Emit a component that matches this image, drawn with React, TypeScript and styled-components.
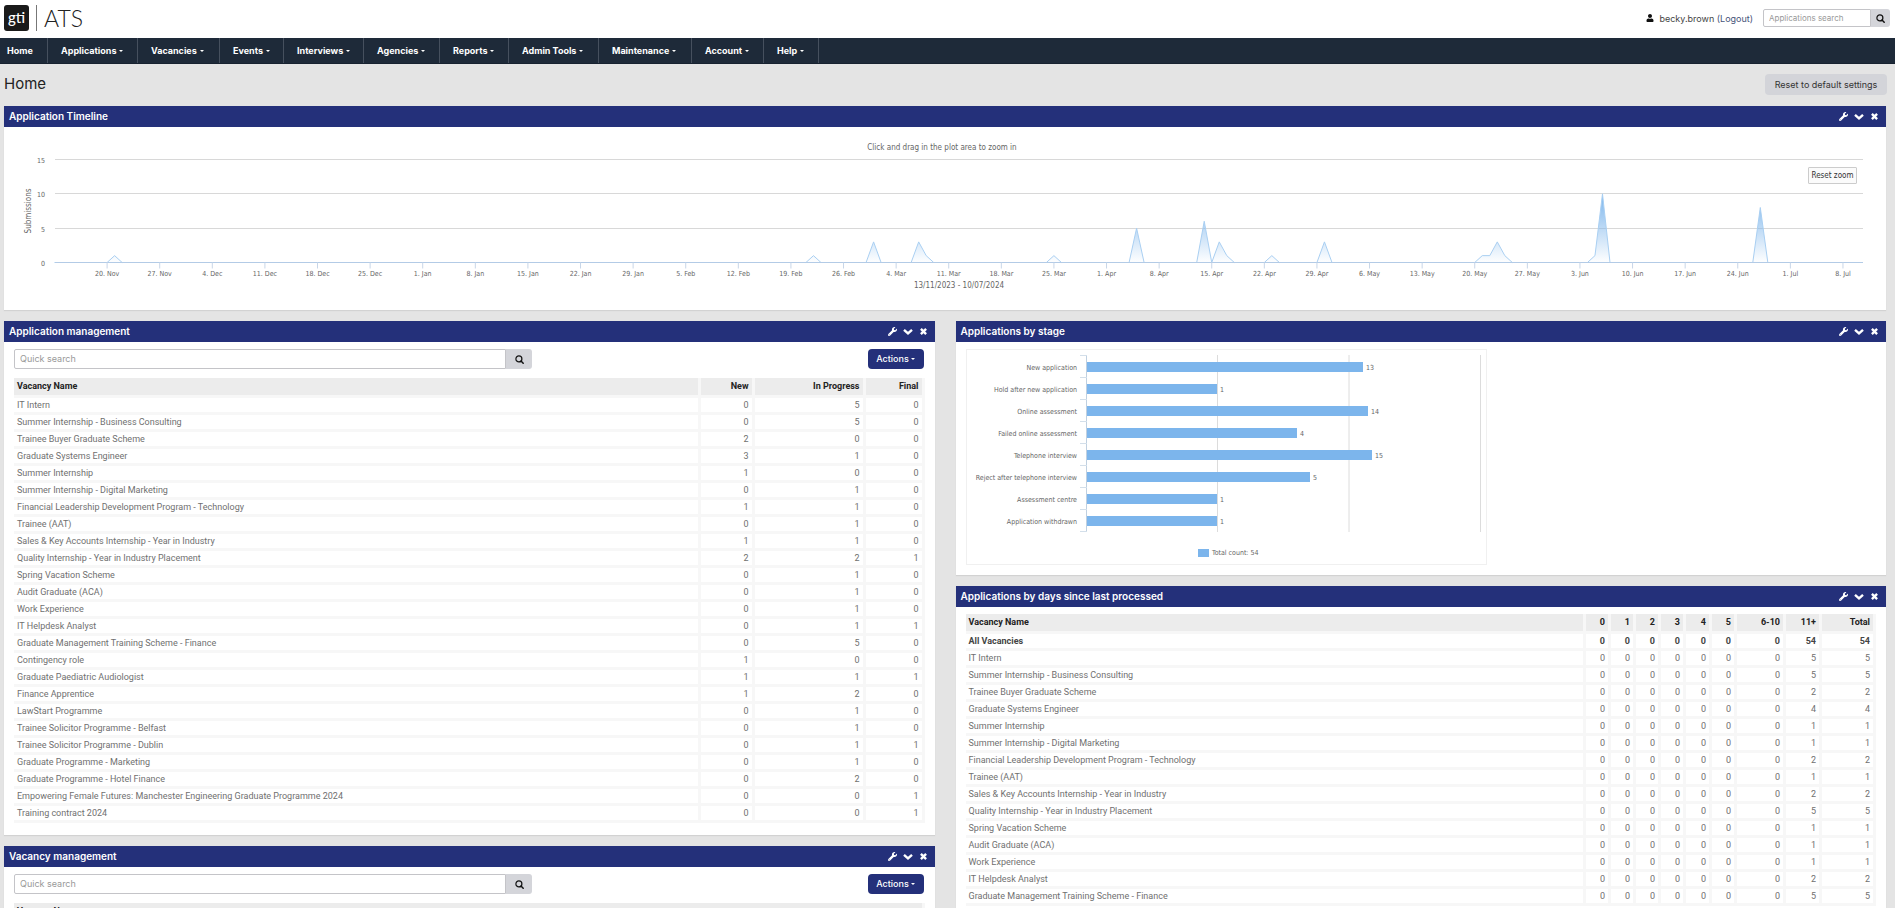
import React, { useLayoutEffect, useRef, useState } from "react";
import styled, { createGlobalStyle } from "styled-components";
import { FaWrench, FaUser } from "react-icons/fa";

const chartFont = '"DejaVu Sans Condensed", "DejaVu Sans", sans-serif';

const GlobalStyle = createGlobalStyle`
  * { box-sizing: border-box; }
  body {
    margin: 0;
    background: #e4e4e4;
    color: #666;
    font-family: Inter, "Open Sans", sans-serif;
    font-size: 9px;
  }
  button, input { font-family: inherit; margin: 0; }
  a { color: inherit; text-decoration: none; }
`;

const Page = styled.div`
  height: 100vh;
  overflow: hidden;
  background: #e4e4e4;
`;

const TopBar = styled.header`
  display: flex;
  align-items: center;
  justify-content: space-between;
  height: 38px;
  padding: 0 5px 2px 4px;
  background: #fff;
`;

const Brand = styled.a`
  display: flex;
  align-items: center;
  gap: 7px;
`;

const BrandMark = styled.span`
  display: flex;
  align-items: center;
  justify-content: center;
  width: 25px;
  height: 26px;
  padding-bottom: 2px;
  border-radius: 3px;
  background: #1a1a1a;
  color: #fff;
  font: 500 15px/16px Lato, sans-serif;
`;

const BrandRule = styled.span`
  width: 1px;
  height: 26px;
  background: #777;
`;

const BrandName = styled.span`
  color: #222;
  font: 300 23px/26px Lato, sans-serif;
`;

const UserArea = styled.div`
  display: flex;
  align-items: center;
  gap: 10px;
  color: #444;
  font-size: 9px;
`;

const UserName = styled.span`
  display: flex;
  align-items: center;
  gap: 5px;
  svg { color: #111; }
`;

const Logout = styled.a`
  color: #46537a;
`;

const SearchGroup = styled.form<{ $width: number; $height: number }>`
  display: flex;
  width: ${(p) => p.$width}px;
  height: ${(p) => p.$height}px;
`;

const SearchInput = styled.input<{ $size: number }>`
  flex: 1;
  min-width: 0;
  padding: 0 5px 1px;
  border: 1px solid #c4c4c8;
  border-radius: 2px 0 0 2px;
  background: #fff;
  font-size: ${(p) => p.$size}px;
  &::placeholder { color: #999; opacity: 1; }
`;

const SearchButton = styled.button<{ $width: number }>`
  display: flex;
  align-items: center;
  justify-content: center;
  width: ${(p) => p.$width}px;
  padding: 0;
  border: 0;
  border-radius: 0 3px 3px 0;
  background: #d4d5da;
  color: #111;
`;

const Nav = styled.nav`
  display: flex;
  height: 26px;
  background: #1e2a39;
  border-bottom: 1px solid #172230;
`;

const NavItem = styled.a<{ $width: number; $first?: boolean }>`
  display: flex;
  align-items: center;
  gap: 3px;
  width: ${(p) => p.$width}px;
  padding-left: ${(p) => (p.$first ? 7 : 13)}px;
  border-right: 1px solid #46505e;
  color: #fff;
  font-size: 9px;
  font-weight: 700;
  white-space: nowrap;
`;

const Caret = styled.span`
  border: 2px solid transparent;
  border-top-color: currentColor;
  border-bottom: 0;
`;

const TitleRow = styled.div`
  display: flex;
  align-items: center;
  justify-content: space-between;
  height: 42px;
  padding: 0 8px 1px 4px;
`;

const Title = styled.h1`
  margin: 0;
  padding-bottom: 3px;
  color: #222;
  font-size: 15px;
  font-weight: 400;
`;

const ResetButton = styled.button`
  width: 122px;
  height: 21px;
  padding: 0 0 1px;
  border: 0;
  border-radius: 4px;
  background: #d3d4d9;
  color: #333;
  font-size: 9px;
`;

const Content = styled.main`
  display: flex;
  flex-direction: column;
  gap: 11px;
  padding: 0 9px 0 4px;
`;

const Columns = styled.div`
  display: grid;
  grid-template-columns: 1fr 1fr;
  gap: 21px;
  align-items: start;
`;

const Column = styled.div`
  display: flex;
  flex-direction: column;
  gap: 11px;
`;

const PanelBox = styled.section`
  background: #fff;
  box-shadow: 0 1px 1px #d2d2d2;
`;

const PanelHead = styled.header`
  display: flex;
  align-items: center;
  justify-content: space-between;
  height: 21px;
  padding: 0 7px 1px 5px;
  background: #24307a;
  color: #fff;
`;

const PanelTitle = styled.h2`
  margin: 0;
  padding-bottom: 1px;
  font-size: 10px;
  font-weight: 600;
`;

const PanelTools = styled.div`
  display: flex;
  gap: 6px;
`;

const ToolButton = styled.button`
  display: flex;
  padding: 0;
  border: 0;
  background: none;
  color: #fff;
`;

const PanelBody = styled.div<{ $bottom?: number }>`
  padding: 7px 10px ${(p) => p.$bottom ?? 12}px;
`;

const Toolbar = styled.div`
  display: flex;
  justify-content: space-between;
  margin-bottom: 9px;
  padding-right: 1px;
`;

const ActionsButton = styled.button`
  display: flex;
  align-items: center;
  justify-content: center;
  gap: 2px;
  width: 56px;
  height: 20px;
  padding: 0 0 1px;
  border: 0;
  border-radius: 4px;
  background: #24307a;
  color: #fff;
  font-size: 9px;
  font-weight: 500;
`;

const Table = styled.table`
  width: 100%;
  table-layout: fixed;
  border-collapse: separate;
  border-spacing: 0;
  font-family: Roboto, sans-serif;
  font-size: 9px;
  line-height: 12px;
`;

const HeadCell = styled.th<{ $right?: boolean; $width?: number }>`
  width: ${(p) => (p.$width ? `${p.$width}px` : "auto")};
  height: 20px;
  padding: 0 3px 2px;
  border: 0 solid #f7f7f7;
  border-width: 0 3px 3px 0;
  background: #ececec;
  background-clip: padding-box;
  color: #222;
  font-weight: 700;
  text-align: ${(p) => (p.$right ? "right" : "left")};
`;

const Cell = styled.td<{ $right?: boolean; $bold?: boolean }>`
  height: 17px;
  padding: 0 3px 1px;
  border: 0 solid #f7f7f7;
  border-width: 0 3px 3px 0;
  color: ${(p) => (p.$bold ? "#444" : "#707070")};
  font-weight: ${(p) => (p.$bold ? 700 : 400)};
  text-align: ${(p) => (p.$right ? "right" : "left")};
  white-space: nowrap;
`;

const TimelineBox = styled.div`
  position: relative;
  height: 183px;
`;

const ZoomButton = styled.button`
  position: absolute;
  top: 40px;
  right: 29px;
  width: 49px;
  height: 17px;
  padding: 0;
  border: 1px solid #ccc;
  border-radius: 1px;
  background: #fbfbfb;
  color: #333;
  font: 8px ${chartFont};
`;

const ChartSvg = styled.svg`
  display: block;
  width: 100%;
  font-family: ${chartFont};
  fill: #666;
`;

const StageBox = styled.div`
  width: 521px;
  max-width: 100%;
  height: 216px;
  border: 1px solid #f0f0f0;
`;

const menu: [string, number][] = [
  ["Home", 48], ["Applications", 90], ["Vacancies", 82], ["Events", 64], ["Interviews", 80],
  ["Agencies", 76], ["Reports", 69], ["Admin Tools", 90], ["Maintenance", 93], ["Account", 72], ["Help", 55],
];

const vacancies: [string, number, number, number][] = [
  ["IT Intern", 0, 5, 0],
  ["Summer Internship - Business Consulting", 0, 5, 0],
  ["Trainee Buyer Graduate Scheme", 2, 0, 0],
  ["Graduate Systems Engineer", 3, 1, 0],
  ["Summer Internship", 1, 0, 0],
  ["Summer Internship - Digital Marketing", 0, 1, 0],
  ["Financial Leadership Development Program - Technology", 1, 1, 0],
  ["Trainee (AAT)", 0, 1, 0],
  ["Sales & Key Accounts Internship - Year in Industry", 1, 1, 0],
  ["Quality Internship - Year in Industry Placement", 2, 2, 1],
  ["Spring Vacation Scheme", 0, 1, 0],
  ["Audit Graduate (ACA)", 0, 1, 0],
  ["Work Experience", 0, 1, 0],
  ["IT Helpdesk Analyst", 0, 1, 1],
  ["Graduate Management Training Scheme - Finance", 0, 5, 0],
  ["Contingency role", 1, 0, 0],
  ["Graduate Paediatric Audiologist", 1, 1, 1],
  ["Finance Apprentice", 1, 2, 0],
  ["LawStart Programme", 0, 1, 0],
  ["Trainee Solicitor Programme - Belfast", 0, 1, 0],
  ["Trainee Solicitor Programme - Dublin", 0, 1, 1],
  ["Graduate Programme - Marketing", 0, 1, 0],
  ["Graduate Programme - Hotel Finance", 0, 2, 0],
  ["Empowering Female Futures: Manchester Engineering Graduate Programme 2024", 0, 0, 1],
  ["Training contract 2024", 0, 0, 1],
];

const AGE_ROWS = 15;

const ageColumns: [string, number][] = [
  ["0", 25], ["1", 25], ["2", 25], ["3", 25], ["4", 26], ["5", 25], ["6-10", 49], ["11+", 36], ["Total", 54],
];

const weeks = [
  "20. Nov", "27. Nov", "4. Dec", "11. Dec", "18. Dec", "25. Dec", "1. Jan", "8. Jan", "15. Jan", "22. Jan",
  "29. Jan", "5. Feb", "12. Feb", "19. Feb", "26. Feb", "4. Mar", "11. Mar", "18. Mar", "25. Mar", "1. Apr",
  "8. Apr", "15. Apr", "22. Apr", "29. Apr", "6. May", "13. May", "20. May", "27. May", "3. Jun", "10. Jun",
  "17. Jun", "24. Jun", "1. Jul", "8. Jul",
];

/* submissions by number of days after 13 November */
const submissions: Record<number, number> = {
  8: 1, 101: 1, 109: 3, 115: 3, 116: 1, 133: 1, 144: 5, 153: 6, 155: 3, 156: 1, 162: 1,
  169: 3, 190: 1, 191: 1, 192: 3, 193: 1, 205: 1, 206: 10, 227: 8,
};

function SearchIcon() {
  return (
    <svg width="9" height="9" viewBox="0 0 9 9" fill="none" stroke="currentColor" aria-hidden="true">
      <circle cx="3.9" cy="3.9" r="3" strokeWidth="1.2" />
      <path d="M6 6 L8.2 8.2" strokeWidth="1.5" strokeLinecap="round" />
    </svg>
  );
}

function ChevronIcon() {
  return (
    <svg width="10" height="9" viewBox="0 0 10 9" fill="none" stroke="currentColor" aria-hidden="true">
      <path d="M1 2.8 L5 6.4 L9 2.8" strokeWidth="2.4" />
    </svg>
  );
}

function CrossIcon() {
  return (
    <svg width="9" height="9" viewBox="0 0 9 9" fill="none" stroke="currentColor" aria-hidden="true">
      <path d="M1.9 1.9 L7.1 7.1 M7.1 1.9 L1.9 7.1" strokeWidth="2.4" />
    </svg>
  );
}

function Timeline() {
  const box = useRef<HTMLDivElement>(null);
  const [width, setWidth] = useState(1882);
  useLayoutEffect(() => {
    const el = box.current;
    if (!el) return;
    const measure = () => setWidth(el.clientWidth);
    measure();
    const observer = new ResizeObserver(measure);
    observer.observe(el);
    return () => observer.disconnect();
  }, []);

  const left = 51;
  const right = width - 23;
  const base = 135.5;
  const unit = 6.87;
  const x = (day: number) => left - 0.5 + (day * (right - left)) / 240.6;
  const points = Array.from({ length: 241 }, (_, d) => `${x(d)},${base - (submissions[d] || 0) * unit}`).join(" L");

  return (
    <TimelineBox ref={box}>
      <ChartSvg height={183} fontSize={7}>
        <defs>
          <linearGradient id="area" gradientUnits="userSpaceOnUse" x1="0" x2="0" y1="67" y2="136">
            <stop offset="0" stopColor="#7cb5ec" />
            <stop offset="1" stopColor="#7cb5ec" stopOpacity="0" />
          </linearGradient>
        </defs>
        <text x={width / 2 - 3} y={23} textAnchor="middle" fontSize={8}>Click and drag in the plot area to zoom in</text>
        {[15, 10, 5, 0].map((v) => (
          <g key={v}>
            <line x1={left} x2={right} y1={Math.floor(base - v * unit) + 0.5} y2={Math.floor(base - v * unit) + 0.5} stroke="#d8d8d8" />
            <text x={41} y={base - v * unit + 3.5} textAnchor="end">{v}</text>
          </g>
        ))}
        <text transform={`translate(27 ${base - 7.5 * unit}) rotate(-90)`} textAnchor="middle" fontSize={8}>Submissions</text>
        <path d={`M${points} L${x(240)},${base} L${x(0)},${base} Z`} fill="url(#area)" />
        <path d={`M${points}`} fill="none" stroke="#a9cff2" strokeWidth={1} />
        <line x1={left} x2={right} y1={base} y2={base} stroke="#b3cbe6" />
        {weeks.map((label, i) => (
          <g key={label}>
            <line x1={x(7 * i + 7)} x2={x(7 * i + 7)} y1={base} y2={base + 6} stroke="#c8d6e8" />
            <text x={x(7 * i + 7)} y={149} textAnchor="middle">{label}</text>
          </g>
        ))}
        <text x={(left + right) / 2} y={161} textAnchor="middle" fontSize={8}>13/11/2023 - 10/07/2024</text>
      </ChartSvg>
      <ZoomButton type="button">Reset zoom</ZoomButton>
    </TimelineBox>
  );
}

const stages: [string, number, number][] = [
  ["New application", 13, 276],
  ["Hold after new application", 1, 130],
  ["Online assessment", 14, 281],
  ["Failed online assessment", 4, 210],
  ["Telephone interview", 15, 285],
  ["Reject after telephone interview", 5, 223],
  ["Assessment centre", 1, 130],
  ["Application withdrawn", 1, 130],
];

function StageChart() {
  return (
    <StageBox>
      <ChartSvg height={214} fontSize={7} viewBox="0 0 519 214">
        {[250.5, 382, 513.5].map((gx) => (
          <line key={gx} x1={gx} x2={gx} y1={5} y2={182} stroke="#dcdcdc" />
        ))}
        <line x1={119.5} x2={119.5} y1={5} y2={182} stroke="#c0d0e0" />
        {Array.from({ length: 9 }, (_, i) => (
          <line key={i} x1={113} x2={120} y1={5.5 + i * 22} y2={5.5 + i * 22} stroke="#d3dfea" />
        ))}
        {stages.map(([label, count, length], i) => (
          <g key={label}>
            <text x={110} y={20 + i * 22} textAnchor="end">{label}</text>
            <rect x={120} y={12 + i * 22} width={length} height={10} fill="#7cb5ec" />
            <text x={123 + length} y={20 + i * 22}>{count}</text>
          </g>
        ))}
        <rect x={231} y={199} width={11} height={8} fill="#7cb5ec" />
        <text x={245} y={205}>Total count: 54</text>
      </ChartSvg>
    </StageBox>
  );
}

function Panel({ title, children }: { title: string; children: React.ReactNode }) {
  return (
    <PanelBox>
      <PanelHead>
        <PanelTitle>{title}</PanelTitle>
        <PanelTools>
          <ToolButton type="button" aria-label="Configure"><FaWrench size={9} /></ToolButton>
          <ToolButton type="button" aria-label="Collapse"><ChevronIcon /></ToolButton>
          <ToolButton type="button" aria-label="Close"><CrossIcon /></ToolButton>
        </PanelTools>
      </PanelHead>
      {children}
    </PanelBox>
  );
}

function QuickSearch() {
  return (
    <Toolbar>
      <SearchGroup $width={518} $height={20}>
        <SearchInput $size={9} placeholder="Quick search" aria-label="Quick search" />
        <SearchButton $width={26} type="button" aria-label="Search"><SearchIcon /></SearchButton>
      </SearchGroup>
      <ActionsButton type="button">Actions<Caret /></ActionsButton>
    </Toolbar>
  );
}

export default function App() {
  return (
    <Page>
      <GlobalStyle />
      <TopBar>
        <Brand href="#" aria-label="gti ATS">
          <BrandMark>gti</BrandMark>
          <BrandRule />
          <BrandName>ATS</BrandName>
        </Brand>
        <UserArea>
          <UserName><FaUser size={8} /><span>becky.brown <Logout href="#">(Logout)</Logout></span></UserName>
          <SearchGroup $width={127} $height={18}>
            <SearchInput $size={8} placeholder="Applications search" aria-label="Applications search" />
            <SearchButton $width={19} type="button" aria-label="Search"><SearchIcon /></SearchButton>
          </SearchGroup>
        </UserArea>
      </TopBar>
      <Nav>
        {menu.map(([label, width], i) => (
          <NavItem key={label} href="#" $width={width} $first={i === 0}>
            {label}{i > 0 && <Caret />}
          </NavItem>
        ))}
      </Nav>
      <TitleRow>
        <Title>Home</Title>
        <ResetButton type="button">Reset to default settings</ResetButton>
      </TitleRow>
      <Content>
        <Panel title="Application Timeline"><Timeline /></Panel>
        <Columns>
          <Column>
            <Panel title="Application management">
              <PanelBody>
                <QuickSearch />
                <Table>
                  <thead>
                    <tr>
                      <HeadCell>Vacancy Name</HeadCell>
                      <HeadCell $right $width={54}>New</HeadCell>
                      <HeadCell $right $width={111}>In Progress</HeadCell>
                      <HeadCell $right $width={59}>Final</HeadCell>
                    </tr>
                  </thead>
                  <tbody>
                    {vacancies.map(([name, ...counts]) => (
                      <tr key={name}>
                        <Cell>{name}</Cell>
                        {counts.map((n, i) => <Cell key={i} $right>{n}</Cell>)}
                      </tr>
                    ))}
                  </tbody>
                </Table>
              </PanelBody>
            </Panel>
            <Panel title="Vacancy management">
              <PanelBody>
                <QuickSearch />
                <Table>
                  <thead><tr><HeadCell>Vacancy Name</HeadCell></tr></thead>
                </Table>
              </PanelBody>
            </Panel>
          </Column>
          <Column>
            <Panel title="Applications by stage">
              <PanelBody $bottom={10}><StageChart /></PanelBody>
            </Panel>
            <Panel title="Applications by days since last processed">
              <PanelBody>
                <Table>
                  <thead>
                    <tr>
                      <HeadCell>Vacancy Name</HeadCell>
                      {ageColumns.map(([label, width]) => (
                        <HeadCell key={label} $right $width={width}>{label}</HeadCell>
                      ))}
                    </tr>
                  </thead>
                  <tbody>
                    <tr>
                      <Cell $bold>All Vacancies</Cell>
                      {ageColumns.map(([label], i) => <Cell key={label} $right $bold>{i < 7 ? 0 : 54}</Cell>)}
                    </tr>
                    {vacancies.slice(0, AGE_ROWS).map(([name, a, b, c]) => (
                      <tr key={name}>
                        <Cell>{name}</Cell>
                        {ageColumns.map(([label], i) => <Cell key={label} $right>{i < 7 ? 0 : a + b + c}</Cell>)}
                      </tr>
                    ))}
                  </tbody>
                </Table>
              </PanelBody>
            </Panel>
          </Column>
        </Columns>
      </Content>
    </Page>
  );
}
